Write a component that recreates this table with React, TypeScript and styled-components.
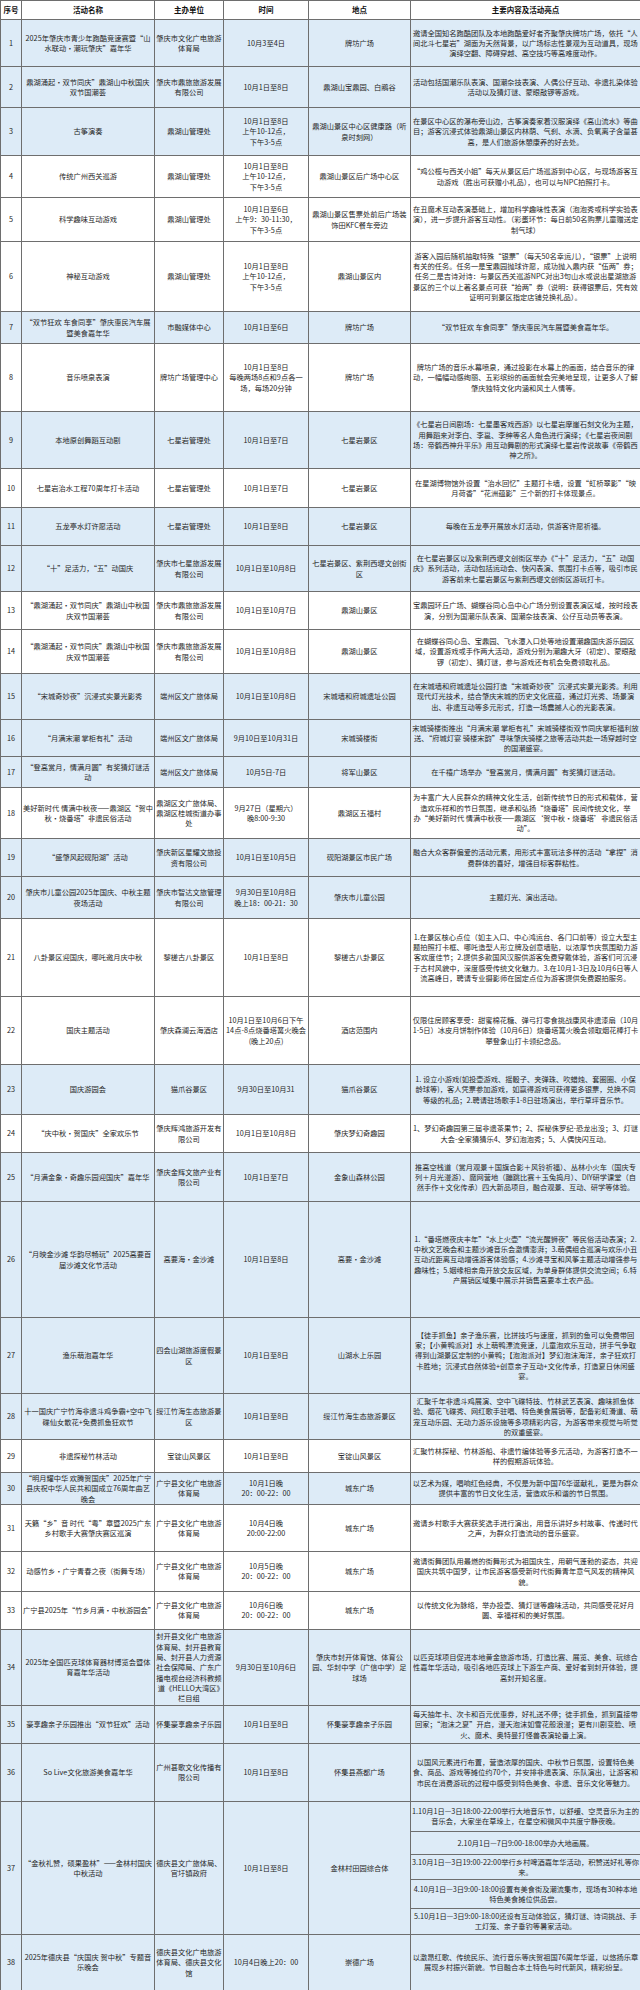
import React from "react";
import styled, { createGlobalStyle } from "styled-components";

interface Activity {
  no: number;
  name: string;
  org: string;
  time: string;
  place: string;
  content: string | string[];
  h: number | number[];
  tint?: boolean;
}

const Global = createGlobalStyle`
  html, body {
    margin: 0;
    padding: 0;
    background: #ffffff;
  }
`;

const rows: Activity[] = [
  {
    no: 1,
    name: "2025年肇庆市青少年跑酷竞速赛暨“山水联动·潮玩肇庆”嘉年华",
    org: "肇庆市文化广电旅游体育局",
    time: "10月3至4日",
    place: "牌坊广场",
    content:
      "邀请全国知名跑酷团队及本地跑酷爱好者齐聚肇庆牌坊广场，依托“人间北斗七星岩”湖面为天然背景，以广场标志性景观为互动道具，现场演绎空翻、障碍穿越、高空技巧等高难度动作。",
    h: 47,
    tint: true,
  },
  {
    no: 2,
    name: "鼎湖涌起·双节同庆”鼎湖山中秋国庆双节国潮荟",
    org: "肇庆市鼎旅旅游发展有限公司",
    time: "10月1日至8日",
    place: "鼎湖山宝鼎园、白鹇谷",
    content:
      "活动包括国潮乐队表演、国潮杂技表演、人偶公仔互动、非遗扎染体验活动以及猜灯谜、蒙眼敲锣等游戏。",
    h: 41,
    tint: true,
  },
  {
    no: 3,
    name: "古筝演奏",
    org: "鼎湖山管理处",
    time: "10月1日至8日\n上午10-12点，\n下午3-5点",
    place: "鼎湖山景区中心区健康路（听泉时刻网）",
    content:
      "在景区中心区的瀑布旁山边，古筝演奏家着汉服演绎《高山流水》等曲目；游客沉浸式体验鼎湖山景区内林荫、气刹、水滴、负氧离子含量甚高，是人们旅游休憩康养的好去处。",
    h: 48,
    tint: true,
  },
  {
    no: 4,
    name: "传统广州西关巡游",
    org: "鼎湖山管理处",
    time: "10月1日至8日\n上午10-12点，\n下午3-5点",
    place: "鼎湖山景区后广场中心区",
    content:
      "“鸡公榄与西关小姐”每天从景区后广场巡游到中心区，与现场游客互动游戏（胜出可获赠小礼品），也可以与NPC拍照打卡。",
    h: 42,
  },
  {
    no: 5,
    name: "科学趣味互动游戏",
    org: "鼎湖山管理处",
    time: "10月1日至6日\n上午9：30-11:30，\n下午3-5点",
    place: "鼎湖山景区售票处前后广场装饰田KFC餐车旁边",
    content:
      "在丑魔术互动表演基础上，增加科学趣味性表演（泡泡秀或科学实验表演），进一步提升游客互动性。（彩蛋环节：每日前50名购票儿童赠送定制气球）",
    h: 44,
  },
  {
    no: 6,
    name: "神秘互动游戏",
    org: "鼎湖山管理处",
    time: "10月1日至8日\n上午10-12点，\n下午3-5点",
    place: "鼎湖山景区内",
    content:
      "游客入园后随机抽取特殊“银票”（每天50名幸运儿），“银票”上说明有关的任务。任务一是宝鼎园抛球许愿，成功抛入鼎内获“伍两”券；任务二是吉诗对诗：与景区西关巡游NPC对出3句山水或说出星湖旅游景区的三个以上著名景点可获“拾两”券（说明：获得银票后，凭有效证明可到景区指定店铺兑换礼品）。",
    h: 70,
  },
  {
    no: 7,
    name: "“双节狂欢 车食同享”肇庆惠民汽车展暨美食嘉年华",
    org: "市融媒体中心",
    time: "10月1日至6日",
    place: "牌坊广场",
    content: "“双节狂欢 车食同享”肇庆惠民汽车展暨美食嘉年华。",
    h: 32,
    tint: true,
  },
  {
    no: 8,
    name: "音乐喷泉表演",
    org: "牌坊广场管理中心",
    time: "10月1日至8日\n每晚两场8点和9点各一场，每场20分钟",
    place: "牌坊广场",
    content:
      "牌坊广场的音乐水幕喷泉，通过投影在水幕上的画面，结合音乐的律动，一幅幅动感绚丽、五彩缤纷的画面就会完美地呈现，让更多人了解肇庆独特文化内涵和风土人情等。",
    h: 68,
  },
  {
    no: 9,
    name: "本地原创舞蹈互动剧",
    org: "七星岩管理处",
    time: "10月1日至7日",
    place: "七星岩景区",
    content:
      "《七星岩日间剧场：七星墨客戏西游》以七星岩摩崖石刻文化为主题，用舞蹈来对李白、李邕、李绅等名人角色进行演绎；《七星岩夜间剧场：帝鹤西神升平乐》用互动舞剧的形式演绎七星岩传说故事《帝鹤西神之所》。",
    h: 57,
    tint: true,
  },
  {
    no: 10,
    name: "七星岩治水工程70周年打卡活动",
    org: "七星岩管理处",
    time: "10月1日至7日",
    place: "七星岩景区",
    content:
      "在星湖博物馆外设置“治水回忆”主题打卡墙，设置“虹桥翠影”“映月荷香”“花洲蕴影”三个新的打卡体现景点。",
    h: 39,
  },
  {
    no: 11,
    name: "五龙亭水灯许愿活动",
    org: "七星岩管理处",
    time: "10月1日至8日",
    place: "七星岩景区",
    content: "每晚在五龙亭开展放水灯活动，供游客许愿祈福。",
    h: 38,
    tint: true,
  },
  {
    no: 12,
    name: "“十”足活力，“五”动国庆",
    org: "肇庆市七星旅游发展有限公司",
    time: "10月1日至10月8日",
    place: "七星岩景区、紫荆西堤文创街区",
    content:
      "在七星岩景区以及紫荆西堤文创街区举办《“十”足活力，“五”动国庆》系列活动，活动包括运动会、快闪表演、氛围打卡点等，吸引市民游客前来七星岩景区与紫荆西堤文创街区游玩打卡。",
    h: 46,
    tint: true,
  },
  {
    no: 13,
    name: "“鼎湖涌起·双节同庆”鼎湖山中秋国庆双节国潮荟",
    org: "肇庆市鼎旅旅游发展有限公司",
    time: "10月1日至10月7日",
    place: "鼎湖山景区",
    content:
      "宝鼎园环丘广场、蝴蝶谷同心岛中心广场分别设置表演区域，按时段表演，分别为国潮乐队表演、国潮杂技表演、公仔互动员等表演。",
    h: 38,
  },
  {
    no: 14,
    name: "“鼎湖涌起·双节同庆”鼎湖山中秋国庆双节国潮荟",
    org: "肇庆市鼎旅旅游发展有限公司",
    time: "10月1日至10月8日",
    place: "鼎湖山景区",
    content:
      "在蝴蝶谷同心岛、宝鼎园、飞水潭入口处等地设置潮趣国庆游乐园区域，设置游戏或手作两大活动，游戏分别为潮趣大牙（初定）、蒙眼敲锣（初定）、猜灯谜，参与游戏还有机会免费领取礼品。",
    h: 44,
  },
  {
    no: 15,
    name: "“宋城奇妙夜”沉浸式实景光影秀",
    org: "端州区文广旅体局",
    time: "10月1日至10月8日",
    place: "宋城墙和府城遗址公园",
    content:
      "在宋城墙和府城遗址公园打造“宋城奇妙夜”沉浸式实景光影秀。利用现代灯光技术，结合肇庆宋城的历史文化底蕴，通过灯光秀、场景演出、非遗互动等多元形式，打造一场震撼人心的光影表演。",
    h: 46,
    tint: true,
  },
  {
    no: 16,
    name: "“月满宋潮 掌柜有礼”活动",
    org: "端州区文广旅体局",
    time: "9月10日至10月31日",
    place: "宋城骑楼街",
    content:
      "宋城骑楼街推出“月满宋潮 掌柜有礼”宋城骑楼街双节同庆掌柜福利放送、“府城灯宴 骑楼宋韵”寻味肇庆骑楼之旅等活动共赴一场穿越时空的国潮盛宴。",
    h: 37,
    tint: true,
  },
  {
    no: 17,
    name: "“登高赏月，情满月圆”有奖猜灯谜活动",
    org: "端州区文广旅体局",
    time: "10月5日-7日",
    place: "将军山景区",
    content: "在千禧广场举办“登高赏月，情满月圆”有奖猜灯谜活动。",
    h: 31,
    tint: true,
  },
  {
    no: 18,
    name: "美好新时代 情满中秋夜——鼎湖区“贺中秋·烧番塔”非遗民俗活动",
    org: "鼎湖区文广旅体局、鼎湖区桂城街道办事处",
    time: "9月27日（星期六）\n晚8:00-9:30",
    place: "鼎湖区五福村",
    content:
      "为丰富广大人民群众的精神文化生活，创新传统节日的形式和载体，营造欢乐祥和的节日氛围，继承和弘扬“烧番塔”民间传统文化，举办“美好新时代 情满中秋夜——鼎湖区‘贺中秋·烧番塔’非遗民俗活动”。",
    h: 51,
  },
  {
    no: 19,
    name: "“盛肇风起砚阳湖”活动",
    org: "肇庆新区星耀文旅投资有限公司",
    time: "10月1日至10月5日",
    place: "砚阳湖景区市民广场",
    content:
      "融合大众客群偏爱的活动元素，用形式丰富玩法多样的活动“拿捏”消费群体的喜好，增强目标客群粘性。",
    h: 38,
    tint: true,
  },
  {
    no: 20,
    name: "肇庆市儿童公园2025年国庆、中秋主题夜场活动",
    org: "肇庆市智达文旅管理有限公司",
    time: "9月30日至10月8日\n晚上18：00-21：30",
    place: "肇庆市儿童公园",
    content: "主题灯光、演出活动。",
    h: 42,
    tint: true,
  },
  {
    no: 21,
    name: "八卦景区迎国庆，哪吒邀月庆中秋",
    org: "黎槎古八卦景区",
    time: "10月1日至8日",
    place: "黎槎古八卦景区",
    content:
      "1.在景区核心点位（如主入口、中心鸿运台、各门口前等）设立大型主题拍照打卡框、哪吒造型人形立牌及创意墙贴，以浓厚节庆氛围助力游客欢度佳节；2.提供多款国风汉服供游客免费穿戴体验，游客们可沉浸于古村风貌中，深度感受传统文化魅力。3.在10月1-3日及10月6日等人流高峰日，聘请专业摄影师在固定点位为游客提供免费跟拍服务。",
    h: 78,
  },
  {
    no: 22,
    name: "国庆主题活动",
    org: "肇庆森澜云海酒店",
    time: "10月1日至10月6日下午\n14点-8点烧番塔篝火晚会\n(晚上20点)",
    place: "酒店范围内",
    content:
      "仅限住房顾客享受：甜蜜棉花糖、弹弓打零食挑战康风非遗漆扇（10月1-5日）冰皮月饼制作体验（10月6日）烧番塔篝火晚会领取烟花棒打卡攀登象山打卡领纪念品。",
    h: 68,
  },
  {
    no: 23,
    name: "国庆游园会",
    org: "猫爪谷景区",
    time: "9月30日至10月31",
    place: "猫爪谷景区",
    content:
      "1. 设立小游戏(如投壶游戏、摇骰子、夹弹珠、吹蜡烛、套圈圈、小保龄球等)，客人凭票参加游戏，如赢得游戏可获得更多银票，兑换不同等级的礼品；2.聘请驻场歌手1-8日驻场演出，举行草坪音乐节。",
    h: 50,
    tint: true,
  },
  {
    no: 24,
    name: "“庆中秋·贺国庆”全家欢乐节",
    org: "肇庆辉鸿旅游开发有限公司",
    time: "10月1日至10月8日",
    place: "肇庆梦幻奇趣园",
    content:
      "1、梦幻奇趣园第三届非遗茶果节；2、探秘侏罗纪-恐龙出没；3、灯谜大会-全家猜猜乐4、梦幻泡泡秀；5、人偶快闪互动。",
    h: 38,
  },
  {
    no: 25,
    name: "“月满金象·奇趣乐园迎国庆”嘉年华",
    org: "肇庆金辉文旅产业有限公司",
    time: "10月1日至7日",
    place: "金象山森林公园",
    content:
      "推高空栈道（赏月观景＋国旗合影＋风铃祈福）、丛林小火车（国庆专列＋月光漫游）、魔网营地（蹦跳比赛＋玉兔捣月）、DIY研学课堂（自然手作＋文化传承）四大新品项目，融合观景、互动、研学等体验。",
    h: 49,
    tint: true,
  },
  {
    no: 26,
    name: "“月映金沙滩 华韵尽畅玩”2025高要首届沙滩文化节活动",
    org: "高要海·金沙滩",
    time: "10月1日至8日",
    place: "高要·金沙滩",
    content:
      "1.“番塔燃夜庆丰年”“水上火壶”“流光醒狮夜”等民俗活动表演；2.中秋文艺晚会和主题沙滩音乐会激情澎湃；3.萌偶组合巡演与欢乐小丑互动近距离互动增强游客体验感；4.沙滩寻宝和风筝主题活动增强参与趣味性；5.姻缘相亲角开放交友区域，为单身群体提供交流空间；6.特产展销区域集中展示并销售高要本土农产品。",
    h: 116,
    tint: true,
  },
  {
    no: 27,
    name: "渔乐萌泡嘉年华",
    org: "四会山湖旅游度假景区",
    time: "10月1日至8日",
    place: "山湖水上乐园",
    content:
      "【徒手抓鱼】亲子渔乐赛，比拼技巧与速度，抓到的鱼可以免费带回家；【小黄鸭派对】水上萌鸭漂流竞速，儿童泡欢乐互动，拼手气争取得到山湖景区定制的小黄鸭；【泡泡派对】梦幻泡沫海洋，亲子狂欢打卡胜地；沉浸式自然体验+创意亲子互动+文化传承，打造夏日休闲盛宴。",
    h: 76,
    tint: true,
  },
  {
    no: 28,
    name: "十一国庆广宁竹海非遗斗鸡争霸+空中飞碟仙女散花+免费抓鱼狂欢节",
    org: "绥江竹海生态旅游景区",
    time: "10月1日至8日",
    place: "绥江竹海生态旅游景区",
    content:
      "汇聚千年非遗斗鸡展演、空中飞碟特技、竹林武艺表演、趣味抓鱼体验、烟花飞碟秀、网红歌手驻唱、特色美食展销等，配备彩虹滑道、萌宠互动乐园、无动力游乐设施等多项精彩内容，为游客带来视觉与听觉的双重盛宴。",
    h: 46,
    tint: true,
  },
  {
    no: 29,
    name: "非遗探秘竹林活动",
    org: "宝锭山风景区",
    time: "10月1日至8日",
    place: "宝锭山风景区",
    content:
      "汇聚竹林探秘、竹林游船、非遗竹编体验等多元活动，为游客打造不一样的假期游玩体验。",
    h: 33,
  },
  {
    no: 30,
    name: "“明月耀中华 欢腾贺国庆”2025年广宁县庆祝中华人民共和国成立76周年曲艺晚会",
    org: "广宁县文化广电旅游体育局",
    time: "10月1日晚\n20：00-22：00",
    place: "城东广场",
    content:
      "以艺术为媒，唱响红色经典，不仅是为新中国76华诞献礼，更是为群众提供丰富的节日文化生活，营造欢乐和谐的节日氛围。",
    h: 30,
    tint: true,
  },
  {
    no: 31,
    name: "天籁“乡”音 时代“粤”章暨2025广东乡村歌手大赛肇庆赛区巡演",
    org: "广宁县文化广电旅游体育局",
    time: "10月4日晚\n20:00-22:00",
    place: "城东广场",
    content:
      "邀请乡村歌手大赛获奖选手进行演出，用音乐讲好乡村故事、传递时代之声，为群众打造流动的音乐盛宴。",
    h: 47,
  },
  {
    no: 32,
    name: "动感竹乡·广宁青春之夜（街舞专场）",
    org: "广宁县文化广电旅游体育局",
    time: "10月5日晚\n20：00-22：00",
    place: "城东广场",
    content:
      "邀请街舞团队用最燃的街舞形式为祖国庆生，用朝气蓬勃的姿态，共迎国庆共筑中国梦，让市民游客感受新时代街舞青年意气风发的精神风貌。",
    h: 40,
  },
  {
    no: 33,
    name: "广宁县2025年“竹乡月满·中秋游园会”",
    org: "广宁县文化广电旅游体育局",
    time: "10月6日晚\n20：00-22：00",
    place: "城东广场",
    content:
      "以传统文化为脉络，举办投壶、猜灯谜等趣味活动，共同感受花好月圆、幸福祥和的美好氛围。",
    h: 38,
  },
  {
    no: 34,
    name: "2025年全国匹克球体育器材博览会暨体育嘉年华活动",
    org: "封开县文化广电旅游体育局、封开县教育局、封开县人力资源社会保障局、广东广播电视台经济科教频道《HELLO大湾区》栏目组",
    time: "9月30日至10月6日",
    place: "肇庆市封开体育馆、体育公园、华封中学（广信中学）足球场",
    content:
      "以匹克球项目促进本地黄金旅游市场，打造比赛、展览、美食、玩综合性嘉年华活动，吸引各地匹克球上下游生产商、爱好者到封开体验，提高封开知名度。",
    h: 76,
    tint: true,
  },
  {
    no: 35,
    name: "豪享趣亲子乐园推出“双节狂欢”活动",
    org: "怀集豪享趣亲子乐园",
    time: "10月1日至8日",
    place: "怀集豪享趣亲子乐园",
    content:
      "每天抽年卡、次卡和百元优惠券，好礼送不停；徒手抓鱼，抓到直接带回家；“泡沫之夏”开启，漫天泡沫如雪花般浪漫；更有川剧变脸、喷火、魔术、奥特曼打怪兽表演轮番上演。",
    h: 38,
    tint: true,
  },
  {
    no: 36,
    name: "So Live文化旅游美食嘉年华",
    org: "广州甚歌文化传播有限公司",
    time: "10月1日至8日",
    place: "怀集县燕都广场",
    content:
      "以国风元素进行布置，营造浓厚的国庆、中秋节日氛围，设置特色美食、商品、游戏等摊位约70个，并安排非遗表演、乐队演出，让游客和市民在消费游玩的过程中感受到特色美食、非遗、音乐文化等魅力。",
    h: 58,
    tint: true,
  },
  {
    no: 37,
    name: "“金秋礼赞，硕果盈林”——金林村国庆中秋活动",
    org: "德庆县文广旅体局、官圩镇政府",
    time: "10月1日至8日",
    place: "金林村田园综合体",
    content: [
      "1.10月1日—3日18:00-22:00举行大地音乐节，以舒缓、空灵音乐为主的音乐会，大家坐在草垛上，在星空和微风中共度宁静夜晚。",
      "2.10月1日—7日9:00-18:00举办大地画展。",
      "3.10月1日—3日19:00-22:00举行乡村啤酒嘉年华活动，积赞送好礼等你来。",
      "4.10月1日—3日9:00-18:00设置有美食街及潮流集市，现场有30种本地特色美食摊位供品尝。",
      "5.10月1日—3日9:00-18:00还设有互动体验区，猜灯谜、诗词挑战、手工灯笼、亲子垂钓等暑家活动。",
    ],
    h: [30, 23, 25, 29, 26],
    tint: true,
  },
  {
    no: 38,
    name: "2025年德庆县“庆国庆 贺中秋”专题音乐晚会",
    org: "德庆县文化广电旅游体育局、德庆县文化馆",
    time: "10月4日晚上20：00",
    place: "崇德广场",
    content:
      "以激昂红歌、传统民乐、流行音乐等庆贺祖国76周年华诞，以悠扬乐章展现乡村振兴新貌。节目融合本土特色与时代新风，精彩纷呈。",
    h: 56,
    tint: true,
  },
];

const Sheet = styled.table`
  width: 640px;
  table-layout: fixed;
  border-collapse: collapse;
  font-family: "Noto Sans CJK SC", "Noto Sans", sans-serif;
  font-size: 7.25px;
  line-height: 10.3px;
  color: #262626;
`;

const Col = styled.col<{ $w: number }>`
  width: ${(p) => p.$w}px;
`;

const HeadRow = styled.tr`
  height: 19px;
  background: #ffffff;
`;

const HeadCell = styled.th`
  border: 1px solid #6e6e6e;
  padding: 0 1px;
  font-weight: 700;
  font-size: 7.5px;
  color: #111;
  text-align: center;
  vertical-align: middle;
`;

const Row = styled.tr<{ $h: number; $tint?: boolean }>`
  height: ${(p) => p.$h}px;
  background: ${(p) => (p.$tint ? "#ddebf7" : "#ffffff")};
`;

const Cell = styled.td`
  border: 1px solid #6e6e6e;
  padding: 0 1px;
  text-align: center;
  vertical-align: middle;
  white-space: pre-line;
  overflow-wrap: anywhere;
`;

const widths = [21, 133, 69, 85, 102, 230];
const heads = ["序号", "活动名称", "主办单位", "时间", "地点", "主要内容及活动亮点"];

const ActivityRows: React.FC<{ item: Activity }> = ({ item }) => {
  if (Array.isArray(item.content)) {
    const hs = item.h as number[];
    const span = item.content.length;
    return (
      <>
        {item.content.map((text, i) => (
          <Row key={i} $h={hs[i]} $tint={item.tint}>
            {i === 0 && (
              <>
                <Cell rowSpan={span}>{item.no}</Cell>
                <Cell rowSpan={span}>{item.name}</Cell>
                <Cell rowSpan={span}>{item.org}</Cell>
                <Cell rowSpan={span}>{item.time}</Cell>
                <Cell rowSpan={span}>{item.place}</Cell>
              </>
            )}
            <Cell>{text}</Cell>
          </Row>
        ))}
      </>
    );
  }
  return (
    <Row $h={item.h as number} $tint={item.tint}>
      <Cell>{item.no}</Cell>
      <Cell>{item.name}</Cell>
      <Cell>{item.org}</Cell>
      <Cell>{item.time}</Cell>
      <Cell>{item.place}</Cell>
      <Cell>{item.content}</Cell>
    </Row>
  );
};

const App: React.FC = () => {
  return (
    <>
      <Global />
      <Sheet>
        <colgroup>
          {widths.map((w, i) => (
            <Col key={i} $w={w} />
          ))}
        </colgroup>
        <thead>
          <HeadRow>
            {heads.map((h) => (
              <HeadCell key={h}>{h}</HeadCell>
            ))}
          </HeadRow>
        </thead>
        <tbody>
          {rows.map((item) => (
            <ActivityRows key={item.no} item={item} />
          ))}
        </tbody>
      </Sheet>
    </>
  );
};

export default App;
